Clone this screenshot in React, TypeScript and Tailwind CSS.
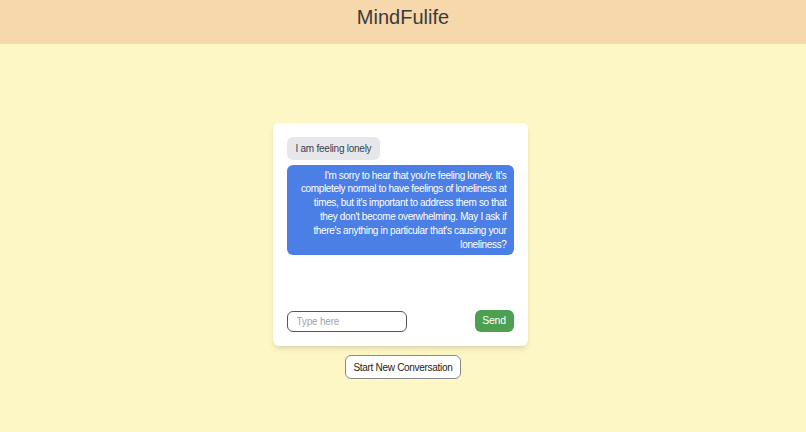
import { useState } from 'react';

const messages = [
  { from: 'user', text: 'I am feeling lonely' },
  {
    from: 'bot',
    text: "I'm sorry to hear that you're feeling lonely. It's completely normal to have feelings of loneliness at times, but it's important to address them so that they don't become overwhelming. May I ask if there's anything in particular that's causing your loneliness?",
  },
];

export default function App() {
  const [draft, setDraft] = useState('');

  return (
    <div className="min-h-screen bg-[#fdf7c6] font-['Liberation_Sans',Arial,sans-serif]">
      <header className="h-[44px] bg-[#f7d7ac] flex justify-center pt-[4px]">
        <h1 className="text-[20px] leading-[26px] text-[#3b3b3b]">MindFulife</h1>
      </header>
      <main className="flex flex-col items-center pt-[79px]">
        <div className="w-[255px] h-[223px] mr-[6px] bg-white rounded-md shadow-md p-[14px] flex flex-col">
          <div className="flex-1 flex flex-col items-start gap-[5px]">
            {messages.map((m, i) =>
              m.from === 'user' ? (
                <div key={i} className="bg-[#e5e7eb] text-[#374151] text-[10px] tracking-[-0.25px] leading-[13px] rounded-md px-[9px] py-[5px]">
                  {m.text}
                </div>
              ) : (
                <div key={i} className="w-full bg-[#4b7fe6] text-white text-[10px] tracking-[-0.35px] leading-[13.9px] text-right rounded-md pl-[9px] pr-[7px] py-[3.5px]">
                  {m.text}
                </div>
              ),
            )}
          </div>
          <div className="flex items-center justify-between">
            <input
              value={draft}
              onChange={(e) => setDraft(e.target.value)}
              placeholder="Type here"
              className="w-[120px] h-[21px] border border-[#555] rounded-md px-[9px] text-[10px] tracking-[-0.2px] placeholder:text-[#9ca3af] outline-none"
            />
            <button className="bg-[#4ca04f] text-white text-[10.5px] tracking-[-0.2px] rounded-md w-[39px] h-[22px]">Send</button>
          </div>
        </div>
        <button className="mt-[9px] bg-white border border-[#888] rounded-md text-[10px] tracking-[-0.3px] font-medium text-[#222] h-[24px] w-[116px]">
          Start New Conversation
        </button>
      </main>
    </div>
  );
}
